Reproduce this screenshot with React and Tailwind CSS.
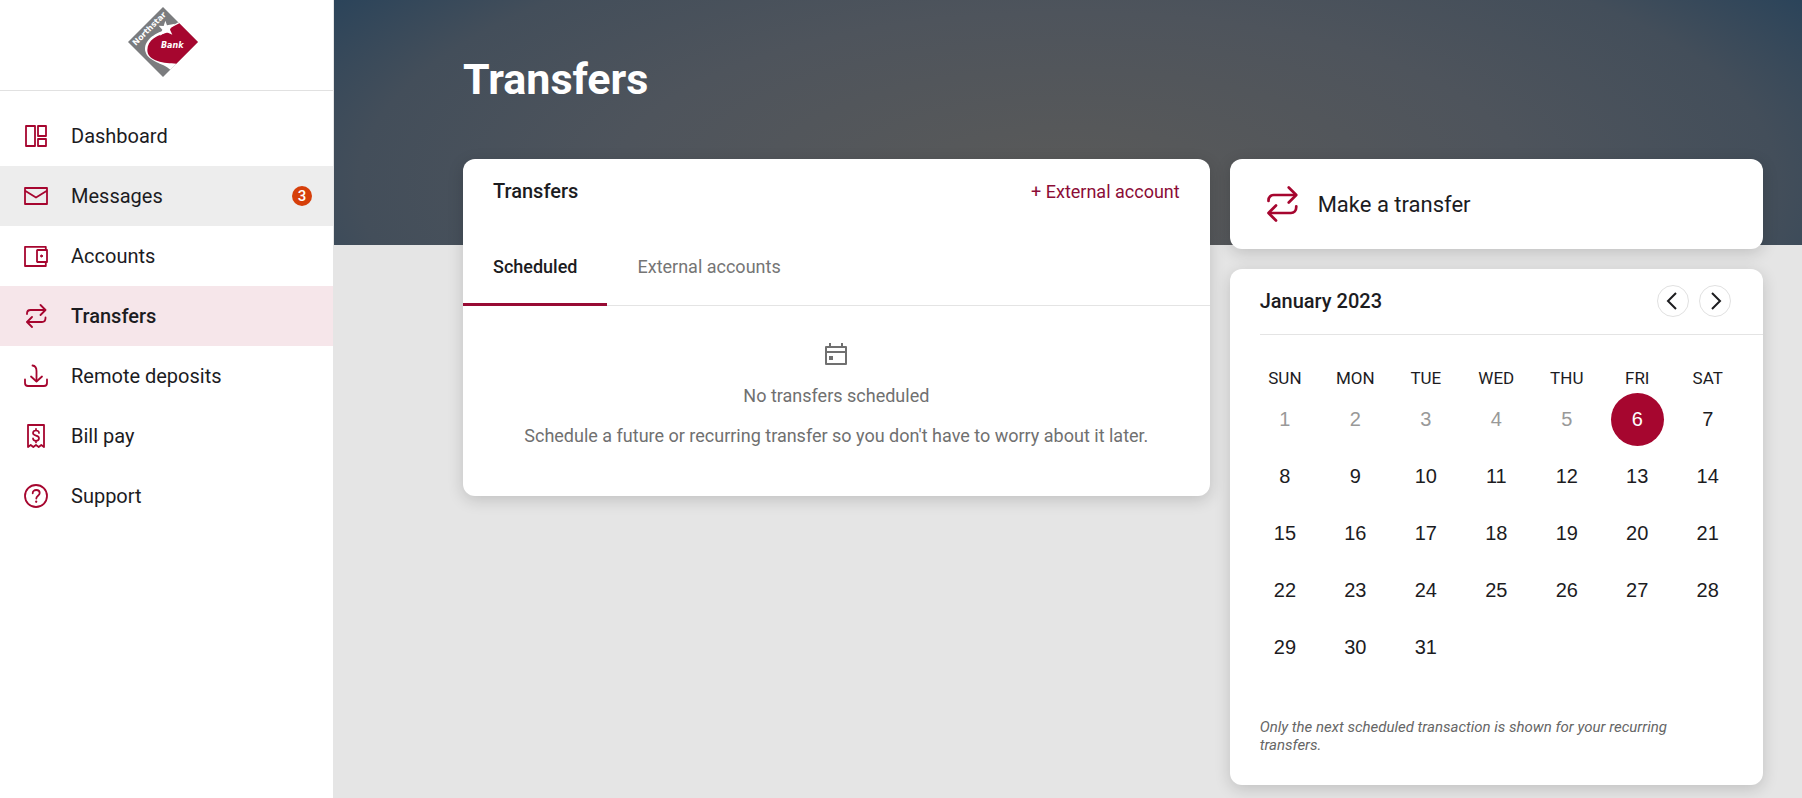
import clsx from 'clsx';

const DashboardIcon = () => (
    <>
        <path d="M2 2h9v20H2z" />
        <path d="M14 2h8v10h-8z" />
        <path d="M14 15h8v7h-8z" />
    </>
);

const MailIcon = () => (
    <>
        <path d="M1 4h22v16H1z" />
        <path d="M1.5 7 12 13.5 22.5 7" />
    </>
);

const WalletIcon = () => (
    <>
        <path d="M21.8 6V2.8H1V22h20.8v-3" />
        <path d="M13.5 6H23v12h-9.500l-.5-.5v-11z" />
        <circle cx="17.500" cy="12" r="1" fill="currentColor" strokeWidth="1" />
    </>
);

const TransferIcon = () => (
    <>
        <path d="M3 10V9.500C3 7.500 4.500 6 6.500 6H21" />
        <path d="m16.500 1 5 5-5 5" />
        <path d="M21.500 13.500v.5c0 2.500-1.500 4-3.500 4H3.500" />
        <path d="m8 13-5 5 5 5" />
    </>
);

const DepositIcon = () => (
    <>
        <path d="M8.500 1.500C11 1.800 12.500 4 12.500 7v10" />
        <path d="m7 12.500 5.500 5 5.500-5" />
        <path d="M1 15.500V19c0 2 1 3 3 3h16c2 0 3-1 3-3v-3.500" />
    </>
);

const BillIcon = () => (
    <>
        <path d="M4 1h16v22l-2.700-2-2.600 2-2.700-2-2.700 2-2.600-2L4 23z" />
        <path d="M15 9c0-1.600-1.200-2.500-3-2.500S9 7.400 9 9c0 1.700 1.500 2.200 3 2.600s3 1 3 2.700-1.200 2.500-3 2.500-3-.9-3-2.500M12 4.800v1.700M12 16.800v1.700" strokeWidth="1.700" />
    </>
);

const SupportIcon = () => (
    <>
        <circle cx="12" cy="12" r="11" />
        <path d="M8.700 9.300C8.700 7.300 10.200 6 12.200 6s3.500 1.300 3.500 3.100c0 2.700-3.400 2.700-3.400 5.400" />
        <path d="M12.200 17.500v.3" strokeWidth="2.200" />
    </>
);

const Icon = ({ shape: Shape, className }) => (
    <svg
        viewBox="0 0 24 24"
        fill="none"
        stroke="currentColor"
        strokeWidth="1.800"
        strokeLinecap="round"
        strokeLinejoin="round"
        className={clsx('flex-shrink-0', className)}
        aria-hidden="true"
    >
        <Shape />
    </svg>
);

const navItems = [
    { label: 'Dashboard', icon: DashboardIcon },
    { label: 'Messages', icon: MailIcon, badge: 3, hovered: true },
    { label: 'Accounts', icon: WalletIcon },
    { label: 'Transfers', icon: TransferIcon, active: true },
    { label: 'Remote deposits', icon: DepositIcon },
    { label: 'Bill pay', icon: BillIcon },
    { label: 'Support', icon: SupportIcon },
];

const weekDays = ['SUN', 'MON', 'TUE', 'WED', 'THU', 'FRI', 'SAT'];
const weeks = [0, 1, 2, 3, 4].map((w) => weekDays.map((_, d) => w * 7 + d + 1));
const today = 6;
const daysInMonth = 31;

const Logo = () => (
    <svg viewBox="54 22 210 210" className="w-[70px] h-[70px]" role="img" aria-label="Northstar Bank">
        <path d="M159 22 264 127 159 232 54 127z" fill="#7b7c7e" />
        {/* Swoosh behind the red field */}
        <path d="M205 68 264 127 181 210C158 190 116 186 107 158 98 128 126 104 160 93z" fill="#fff" />
        <path d="M182 84 208 71 264 127 199 192C165 191 112 186 112 151c0-30 30-46 66-54z" fill="#a6062f" />
        <path d="m166 63 5 14 25-5-17 16 8 17-18-8-20 11 8-18-11-12 15 1z" fill="#fff" />
        <text
            transform="translate(77 139) rotate(-45)"
            className="font-['DejaVu_Sans',sans-serif] text-[24px] font-bold"
            fill="#fff"
        >
            Northstar
        </text>
        <text x="153" y="144" className="font-['DejaVu_Sans',sans-serif] text-[24px] font-bold italic" fill="#fff">
            Bank
        </text>
    </svg>
);

const Sidebar = () => (
    <aside className="w-[334px] flex-shrink-0 bg-white border-r border-[#e5e5e5]">
        <div className="h-[91px] pt-[7px] pr-2 flex justify-center border-b border-[#e1e1e1]">
            <Logo />
        </div>
        <nav className="pt-[15px]">
            {navItems.map((item) => (
                <a
                    key={item.label}
                    href="#"
                    className={clsx(
                        'flex items-center h-[60px] pl-6 pr-[21px] text-[20px] text-[#1c1c1f]',
                        item.active && 'bg-[#f6e6ea] font-medium',
                        item.hovered && 'bg-[#ededed]'
                    )}
                >
                    <Icon shape={item.icon} className="w-6 h-6 text-[#a6062f]" />
                    <span className="ml-[23px] flex-1">{item.label}</span>
                    {item.badge && (
                        <span className="w-5 h-5 rounded-full bg-[#d63f0a] text-white text-[15px] font-medium leading-5 text-center">
                            {item.badge}
                        </span>
                    )}
                </a>
            ))}
        </nav>
    </aside>
);

const Card = ({ className, children }) => (
    <section className={clsx('bg-white rounded-xl shadow-[0_4px_16px_rgba(0,0,0,0.16)]', className)}>
        {children}
    </section>
);

const TransfersCard = () => (
    <Card className="pb-12">
        <div className="flex items-center justify-between h-16 px-[30px]">
            <h2 className="text-[20px] font-medium">Transfers</h2>
            <button type="button" className="text-[18px] text-[#8c0d37]">+ External account</button>
        </div>
        <div className="flex h-[83px] border-b border-[#e4e4e4]">
            <button
                type="button"
                className="px-[30px] pt-[7px] -mb-px text-[18px] font-medium border-b-[3px] border-[#980b34]"
            >
                Scheduled
            </button>
            <button type="button" className="px-[30px] pt-[4px] text-[18px] text-[#757575]">External accounts</button>
        </div>
        <div className="flex flex-col items-center pt-9 text-[18px] leading-6 text-[#707070]">
            <svg
                viewBox="0 0 24 24"
                fill="none"
                stroke="currentColor"
                strokeWidth="2"
                className="w-6 h-6"
                aria-hidden="true"
            >
                <path d="M2 5h20v17H2zM2 10h20" strokeLinejoin="round" />
                <path d="M6 1v4M18 1v4" />
                <path d="M5 14h4v4H5z" fill="currentColor" stroke="none" />
            </svg>
            <p className="mt-[18px]">No transfers scheduled</p>
            <p className="mt-4">Schedule a future or recurring transfer so you don't have to worry about it later.</p>
        </div>
    </Card>
);

const MonthButton = ({ label, path }) => (
    <button
        type="button"
        aria-label={label}
        className="flex items-center justify-center w-8 h-8 rounded-full border border-[#e1e1e1]"
    >
        <svg viewBox="0 0 20 20" fill="none" stroke="currentColor" strokeWidth="2" className="w-5 h-5" aria-hidden="true">
            <path d={path} />
        </svg>
    </button>
);

const CalendarCard = () => (
    <Card>
        <div className="flex items-center justify-between h-[66px] ml-[30px] pr-8 pb-[2px] border-b border-[#e4e4e4]">
            <h2 className="text-[20px] font-medium">January 2023</h2>
            <div className="flex gap-[10px]">
                <MonthButton label="Previous month" path="M13 2 5 10l8 8" />
                <MonthButton label="Next month" path="m7 2 8 8-8 8" />
            </div>
        </div>
        <div className="px-5 pt-[30px]">
            <table className="w-full table-fixed text-center">
                <thead>
                    <tr>
                        {weekDays.map((day) => (
                            <th key={day} className="h-[26px] p-0 text-[17px] leading-6 font-normal">{day}</th>
                        ))}
                    </tr>
                </thead>
                <tbody className="font-['Liberation_Sans',sans-serif] text-[20px]">
                    {weeks.map((week) => (
                        <tr key={week[0]}>
                            {week.map((day) => (
                                <td key={day} className="h-[57px] p-0 align-middle">
                                    {day <= daysInMonth && (
                                        <button
                                            type="button"
                                            disabled={day < today}
                                            className={clsx(
                                                'block mx-auto w-[53px] h-[53px] pb-[2px] rounded-full',
                                                day < today && 'text-[#999]',
                                                day === today && 'bg-[#a6062f] text-white'
                                            )}
                                        >
                                            {day}
                                        </button>
                                    )}
                                </td>
                            ))}
                        </tr>
                    ))}
                </tbody>
            </table>
        </div>
        <p className="pl-[30px] pr-[60px] pt-[42px] pb-[31px] text-[15px] leading-[18px] italic text-[#666]">
            Only the next scheduled transaction is shown for your recurring transfers.
        </p>
    </Card>
);

const App = () => {
    return (
        <div className="flex min-h-screen bg-[#e5e5e5] font-[Roboto,sans-serif] text-[#1c1c1f]">
            <Sidebar />
            <main className="flex-1 min-w-0">
                <header className="h-[245px] pl-[129px] pt-[51px] bg-[radial-gradient(62%_140%_at_50%_75%,#5a5a59_0%,#4e545c_50%,#434e5a_78%,#27425a_100%)]">
                    <h1 className="text-[43px] leading-[56px] font-bold text-white">Transfers</h1>
                </header>
                <div className="grid grid-cols-[7fr_5fr] items-start gap-5 -mt-[86px] pl-[129px] pr-[39px] pb-[13px]">
                    <TransfersCard />
                    <div className="flex flex-col gap-5">
                        <Card>
                            <button type="button" className="flex items-center w-full h-[90px] pl-[34px] text-[22px]">
                                <Icon shape={TransferIcon} className="w-9 h-9 text-[#a6062f]" />
                                <span className="ml-[18px]">Make a transfer</span>
                            </button>
                        </Card>
                        <CalendarCard />
                    </div>
                </div>
            </main>
        </div>
    );
};

export default App;
